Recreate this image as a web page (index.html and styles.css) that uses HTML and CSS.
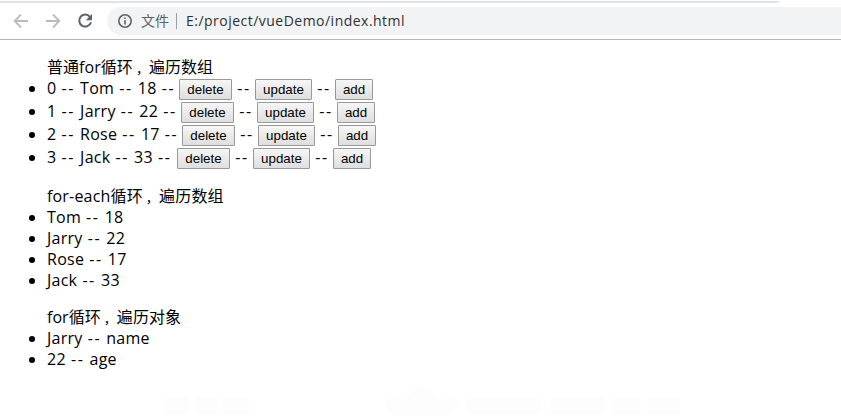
FILE: index.html
```
<!DOCTYPE html>
<html lang="zh-CN">
<head>
<meta charset="utf-8">
<title>index.html</title>
<link rel="stylesheet" href="styles.css">
</head>
<body>
<header class="browser">
  <div class="tabstrip"></div>
  <nav class="toolbar">
    <svg class="nav-icon" viewBox="0 0 16 16"><path d="M15 8H2M8 1.5L1.7 8L8 14.5"/></svg>
    <svg class="nav-icon forward" viewBox="0 0 16 16"><path d="M1 8H14M8 1.5L14.3 8L8 14.5"/></svg>
    <svg class="nav-icon reload" viewBox="0 0 16 16"><path d="M13.2 4.2A6 6 0 1 0 14 9.2"/><path class="solid" d="M15 1V7.2H8.8Z"/></svg>
    <div class="address">
      <svg class="info" viewBox="0 0 16 16"><circle cx="8" cy="8" r="6.2"/><path d="M8 7.2V11.5M8 4.5V6"/></svg>
      <span class="scheme">文件</span>
      <span class="url">E:/project/vueDemo/index.html</span>
    </div>
  </nav>
</header>
<main>
  <ul>
    <div class="title">普通for循环<span class="comma">，</span>遍历数组</div>
    <li><div class="row"><span class="lead w0">0 <i>--</i> Tom <i>--</i> 18 <i>--</i></span><button>delete</button><span class="sep"><i>--</i></span><button class="update">update</button><span class="sep"><i>--</i></span><button class="add">add</button></div></li>
    <li><div class="row"><span class="lead w1">1 <i>--</i> Jarry <i>--</i> 22 <i>--</i></span><button>delete</button><span class="sep"><i>--</i></span><button class="update">update</button><span class="sep"><i>--</i></span><button class="add">add</button></div></li>
    <li><div class="row"><span class="lead w2">2 <i>--</i> Rose <i>--</i> 17 <i>--</i></span><button>delete</button><span class="sep"><i>--</i></span><button class="update">update</button><span class="sep"><i>--</i></span><button class="add">add</button></div></li>
    <li><div class="row"><span class="lead w3">3 <i>--</i> Jack <i>--</i> 33 <i>--</i></span><button>delete</button><span class="sep"><i>--</i></span><button class="update">update</button><span class="sep"><i>--</i></span><button class="add">add</button></div></li>
  </ul>
  <ul>
    <div class="title wide">for-each循环<span class="comma">，</span>遍历数组</div>
    <li>Tom <i>--</i> 18</li>
    <li>Jarry <i>--</i> 22</li>
    <li>Rose <i>--</i> 17</li>
    <li>Jack <i>--</i> 33</li>
  </ul>
  <ul>
    <div class="title">for循环<span class="comma">，</span>遍历对象</div>
    <li>Jarry <i>--</i> name</li>
    <li>22 <i>--</i> age</li>
  </ul>
</main>
<svg class="ghost" viewBox="0 0 520 34"><rect x="1" y="13" width="26" height="18" rx="3"/><rect x="31" y="13" width="26" height="18" rx="3"/><rect x="60" y="13" width="26" height="18" rx="3"/><path d="M220 21L232 9L240 18Q260-12 280 18L288 9L298 21L288 32H232Z"/><rect x="302" y="13" width="76" height="18" rx="3"/><rect x="387" y="13" width="56" height="18" rx="3"/><rect x="449" y="13" width="28" height="18" rx="3"/><rect x="484" y="13" width="33" height="18" rx="3"/></svg>
</body>
</html>
```
FILE: styles.css
```
* { box-sizing: border-box; }
body {
  margin: 0;
  height: 418px;
  overflow: hidden;
  background: #fff;
  color: #000;
  font: 16px/21px "Open Sans", "Noto Sans CJK SC", sans-serif;
}
.browser { display: flow-root; height: 40px; border-bottom: 1px solid #b3b5b8; }
.tabstrip { width: 779px; height: 2px; margin-top: 1px; background: #dee3e8; border-bottom-right-radius: 4px; }
.toolbar { display: flex; align-items: center; height: 28px; margin-top: 4px; padding-left: 13px; }
.nav-icon { width: 16px; height: 16px; margin-right: 16px; fill: none; stroke: #babcbe; stroke-width: 1.8; }
.reload { stroke: #5f6368; stroke-width: 2; margin-right: 14px; }
.solid { fill: #5f6368; stroke: none; }
.address { flex: 1; display: flex; align-items: center; height: 28px; padding-left: 10px; background: #f1f3f4; border-radius: 14px 0 0 14px; font-size: 14px; }
.info { width: 16px; height: 16px; fill: none; stroke: #5f6368; stroke-width: 1.6; }
.scheme { width: 36px; margin-left: 8px; border-right: 1px solid #9aa0a6; line-height: 16px; color: #5f6368; white-space: nowrap; }
.url { margin: -2px 0 0 9px; color: #303134; letter-spacing: 0.48px; }
main { padding: 17px 8px 0; }
ul { margin: 0 0 16px; padding-left: 39px; }
li { letter-spacing: 0.25px; word-spacing: 0.7px; }
i { font-style: normal; letter-spacing: 1.6px; }
.title { height: 21px; letter-spacing: 0.05px; }
.wide { letter-spacing: 0.18px; }
.comma { padding-left: 3px; font-size: 13px; line-height: 1; }
.row { display: flex; align-items: center; height: 23px; }
.lead { flex: none; width: 132px; padding-bottom: 2px; white-space: nowrap; }
.w1 { width: 134px; }
.w2 { width: 135px; }
.w3 { width: 130px; }
.sep { width: 23px; padding: 0 0 2px 1px; text-align: center; }
button {
  width: 53px;
  height: 21px;
  padding: 0;
  border: 1px solid #999;
  border-radius: 1px;
  background: linear-gradient(#f6f6f6, #dedede);
  color: #000;
  font: 13.333px/17px "Liberation Sans", sans-serif;
  letter-spacing: 0;
}
.update { width: 57px; }
.add { width: 38px; }
.ghost { position: absolute; left: 163px; top: 384px; width: 520px; height: 34px; fill: #fdfdfd; }
```
